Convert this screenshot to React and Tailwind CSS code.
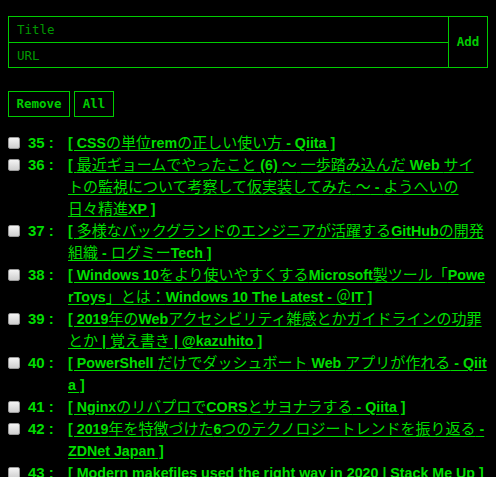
import { useState } from 'react';

const items = [
  { id: 35, title: 'CSSの単位remの正しい使い方 - Qiita' },
  { id: 36, title: '最近ギョームでやったこと (6) 〜 一歩踏み込んだ Web サイトの監視について考察して仮実装してみた 〜 - ようへいの日々精進XP' },
  { id: 37, title: '多様なバックグランドのエンジニアが活躍するGitHubの開発組織 - ログミーTech' },
  { id: 38, title: 'Windows 10をより使いやすくするMicrosoft製ツール「PowerToys」とは：Windows 10 The Latest - ＠IT' },
  { id: 39, title: '2019年のWebアクセシビリティ雑感とかガイドラインの功罪とか | 覚え書き | @kazuhito' },
  { id: 40, title: 'PowerShell だけでダッシュボート Web アプリが作れる - Qiita' },
  { id: 41, title: 'NginxのリバプロでCORSとサヨナラする - Qiita' },
  { id: 42, title: '2019年を特徴づけた6つのテクノロジートレンドを振り返る - ZDNet Japan' },
  { id: 43, title: 'Modern makefiles used the right way in 2020 | Stack Me Up' },
];

// latin runs are bold, japanese stays regular and a touch larger
function Mixed({ text }) {
  return text.split(/([\x20-\x7E]+)/).map((part, i) =>
    /[\x21-\x7E]/.test(part) ? (
      <span key={i} className="text-[14.25px] font-bold">{part}</span>
    ) : (
      <span key={i} className="text-[15px]">{part}</span>
    )
  );
}

const mono = { fontFamily: '"DejaVu Sans Mono", "Liberation Mono", monospace' };

export default function App() {
  const [checked, setChecked] = useState({});

  return (
    <div
      className="min-h-screen bg-black px-2 pt-4 pb-4 text-[#00dd00]"
      style={{ fontFamily: '"Liberation Sans", "Noto Sans CJK JP", sans-serif' }}
    >
      <div className="flex h-[52px] border border-[#00cc00]" style={mono}>
        <div className="flex flex-1 flex-col">
          <input
            placeholder="Title"
            className="h-[26px] border-b border-[#00cc00] bg-black px-2 text-[12.5px] text-[#00cc00] outline-none placeholder:text-[#009900]"
          />
          <input
            placeholder="URL"
            className="h-[24px] bg-black px-2 text-[12.5px] text-[#00cc00] outline-none placeholder:text-[#009900]"
          />
        </div>
        <button className="w-[39px] border-l border-[#00cc00] text-[12.5px] font-bold text-[#00cc00]">
          Add
        </button>
      </div>

      <div className="mt-[23px] flex gap-[4px]" style={mono}>
        <button className="h-[26px] w-[62px] border border-[#00cc00] text-[12.5px] font-bold text-[#00cc00]">
          Remove
        </button>
        <button className="h-[26px] w-[40px] border border-[#00cc00] text-[12.5px] font-bold text-[#00cc00]">
          All
        </button>
      </div>

      <ul className="mt-[15px]">
        {items.map((it) => (
          <li key={it.id} className="flex text-[15px] leading-[22px]">
            <span className="flex h-[22px] w-[20px] shrink-0 items-center">
              <input
                type="checkbox"
                checked={!!checked[it.id]}
                onChange={() => setChecked({ ...checked, [it.id]: !checked[it.id] })}
                className="h-[12px] w-[12px] appearance-none rounded-[2px] border border-[#9a9a9a] bg-gradient-to-b from-[#f4f4f4] to-[#cfcfcf] checked:bg-[#00cc00]"
              />
            </span>
            <span className="w-[40px] shrink-0 font-bold">{it.id} :</span>
            <a
              href="#"
              className="min-w-0 flex-1 break-all text-[#00dd00] underline decoration-[#00dd00] underline-offset-[2px]"
            >
              <Mixed text={'[ ' + it.title + ' ]'} />
            </a>
          </li>
        ))}
      </ul>
    </div>
  );
}
